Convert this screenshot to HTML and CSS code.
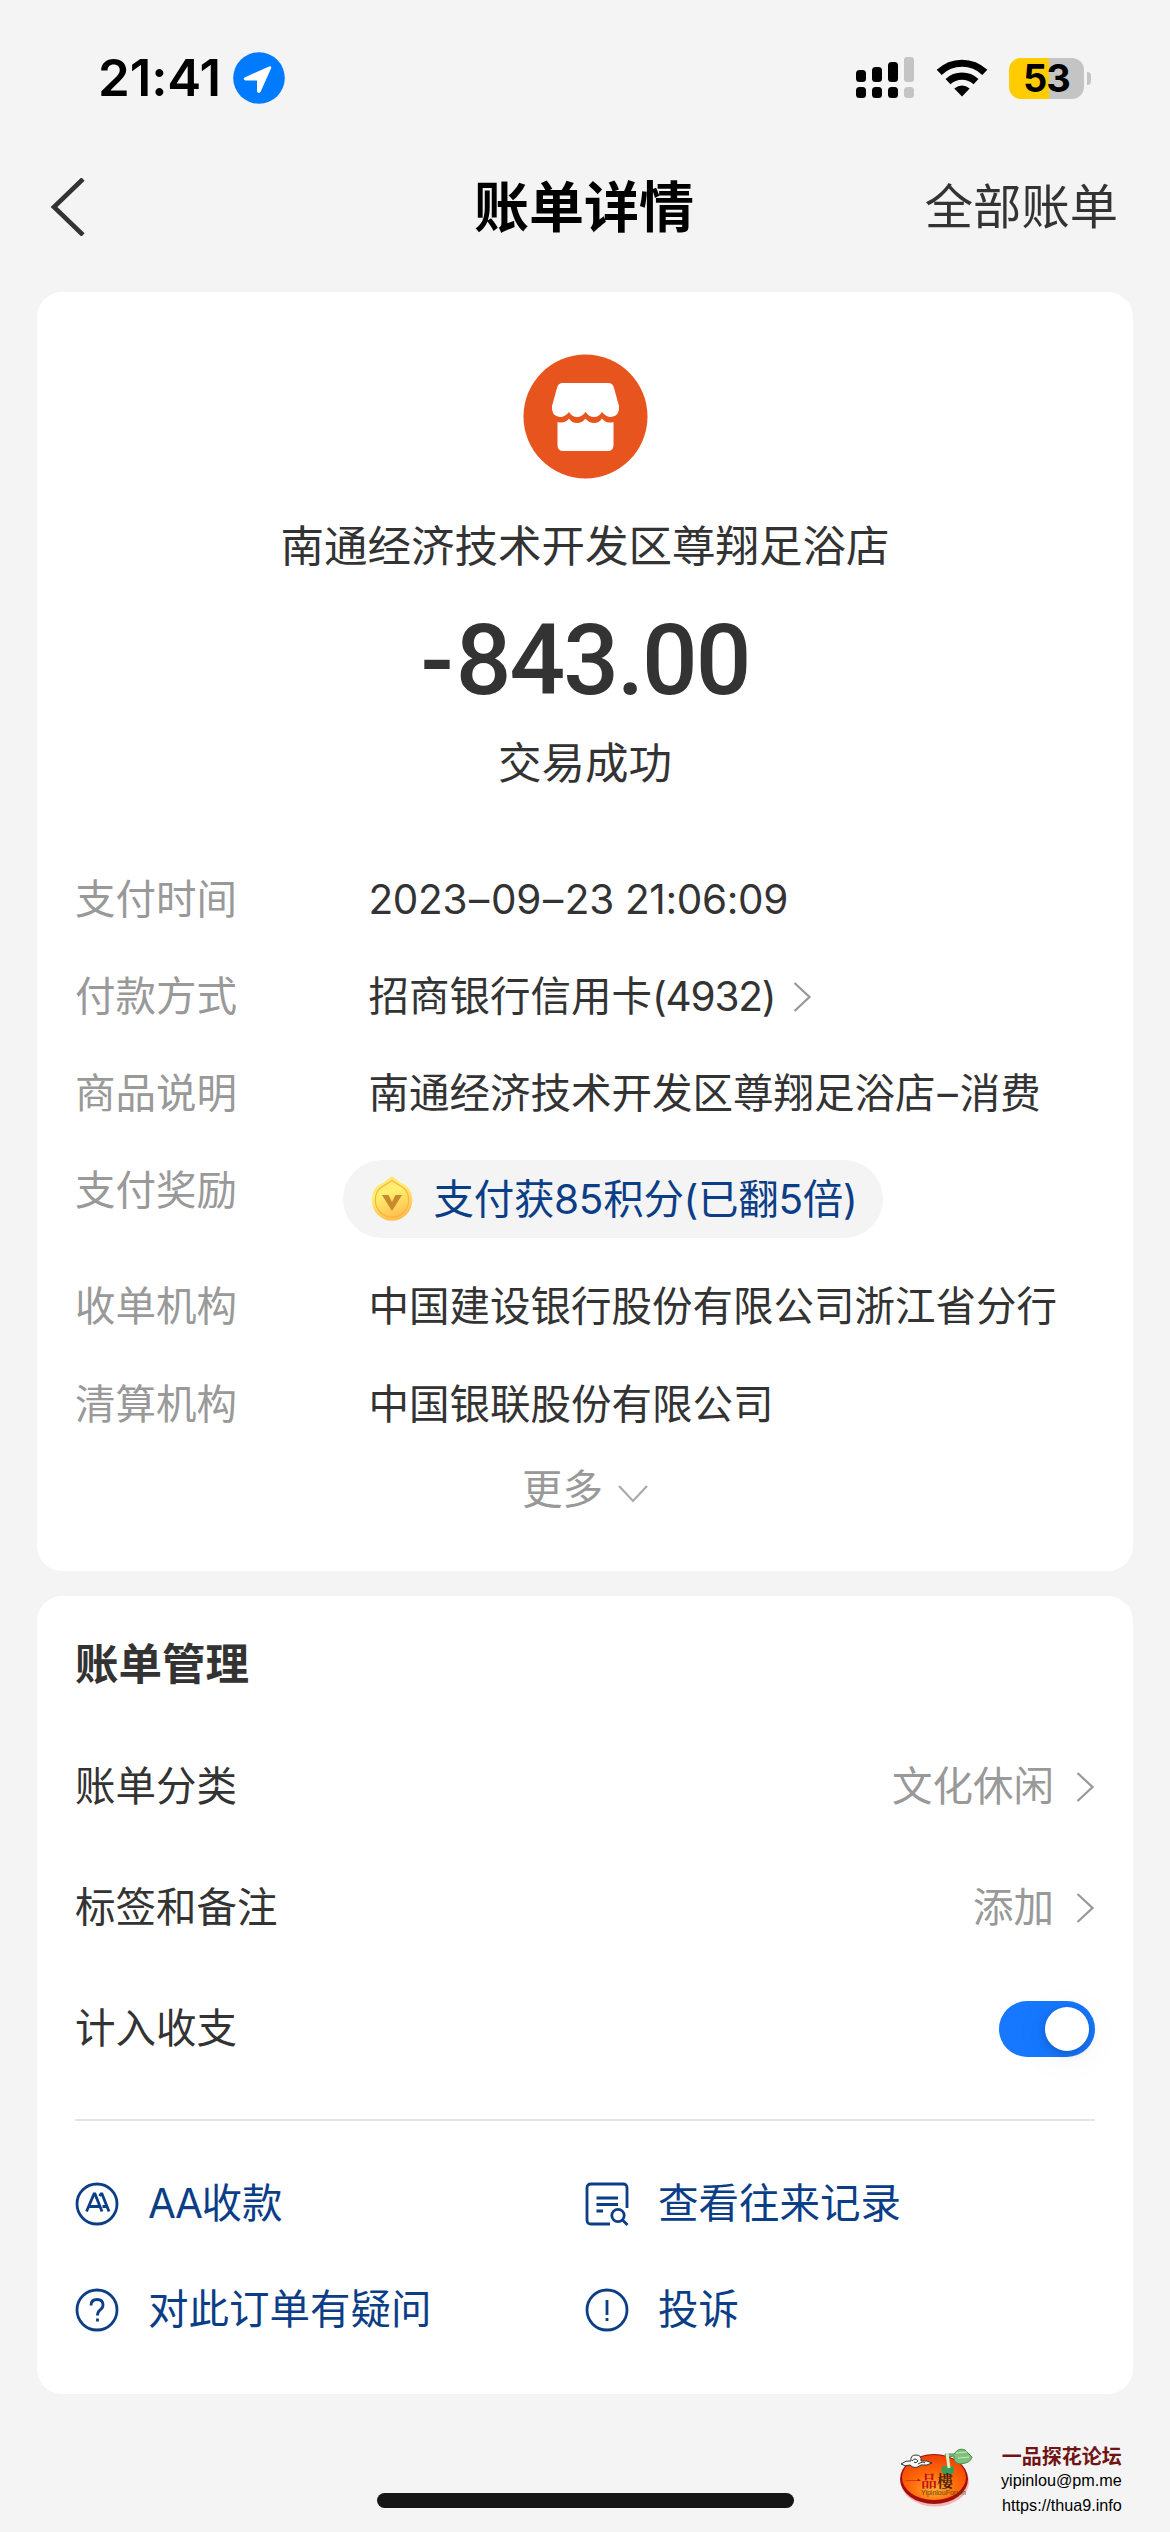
FILE: index.html
```html
<!DOCTYPE html>
<html lang="zh-CN">
<head>
<meta charset="utf-8">
<title>账单详情</title>
<link rel="stylesheet" href="styles.css">
</head>
<body>
<div class="screen">
  <header class="status">
    <span class="clock">21:41</span>
    <svg class="locate" width="52" height="52" viewBox="0 0 52 52"><circle cx="26" cy="26" r="25.8" fill="#007aff"/><path d="M11.5 25.5 L36 14.500 Q38.800 13.600 38 16.500 L27.500 40 Q25 42 24 39.500 V28.500 H12.500 Q9.500 27.500 11.500 25.500Z" fill="#fff"/></svg>
    <svg class="signal" width="58" height="42" viewBox="0 0 58 42"><g fill="#000"><rect y="13" width="10" height="12" rx="3.500"/><rect x="16" y="10" width="10" height="15" rx="3.500"/><rect x="32" y="5" width="10" height="20" rx="3.500"/><rect y="30" width="10" height="11" rx="3.500"/><rect x="16" y="30" width="10" height="11" rx="3.500"/><rect x="32" y="30" width="10" height="11" rx="3.500"/></g><g fill="#c4c4c4"><rect x="48" width="10" height="25" rx="3"/><rect x="48" y="30" width="10" height="11" rx="3.500"/></g></svg>
    <svg class="wifi" width="52" height="38" viewBox="0 0 52 38"><g fill="none" stroke="#000" stroke-width="7.200"><path d="M3.200 13.400 A33 33 0 0 1 48.800 13.400"/><path d="M12 22.600 A20.500 20.500 0 0 1 40 22.600"/></g><path d="M18.300 29.600 Q26 23.200 33.700 29.600 L26 37.500Z"/></svg>
    <div class="battery"><span>53</span></div><i class="nub"></i>
  </header>

  <nav class="nav">
    <svg class="back" width="36" height="58" viewBox="0 0 36 58"><path d="M33 1 L4 29 L33 57" fill="none" stroke="#333" stroke-width="4.600"/></svg>
    <h1>账单详情</h1>
    <a class="all">全部账单</a>
  </nav>

  <main>
    <section class="card bill">
      <svg class="shop" width="125" height="125" viewBox="0 0 125 125"><circle cx="62.500" cy="62.500" r="62" fill="#e8541e"/><path d="M40 29 H85 Q90 29 91 34 L96 52 Q97 62 88 63 Q83 63 79 58 Q76 63 71 63 Q66 63 62.500 58 Q59 63 54 63 Q49 63 46 58 Q42 63 37 63 Q28 62 29 52 L34 34 Q35 29 40 29Z" fill="#fff"/><path d="M34.500 68 Q42 70 46 64.500 Q49 69 54 69 Q59 69 62.500 64.500 Q66 69 71 69 Q76 69 79 64.500 Q83 70 90.500 68 V91 Q90.500 97 84.500 97 H40.500 Q34.500 97 34.500 91Z" fill="#fff"/></svg>
      <p class="merchant">南通经济技术开发区尊翔足浴店</p>
      <p class="amount"><span class="minus">-</span>843.00</p>
      <p class="state">交易成功</p>

      <dl class="details">
        <div class="row"><dt>支付时间</dt><dd class="date">2023<span class="dash">–</span>09<span class="dash">–</span>23 21:06:09</dd></div>
        <div class="row"><dt>付款方式</dt><dd>招商银行信用卡<span class="num">(4932)</span><svg class="chev inline" width="19" height="30" viewBox="0 0 19 30"><path d="M1.500 1 L16.500 15 L1.500 29"/></svg></dd></div>
        <div class="row"><dt>商品说明</dt><dd>南通经济技术开发区尊翔足浴店<span class="dash">–</span>消费</dd></div>
        <div class="row reward"><dt>支付奖励</dt><dd class="pill">
          <svg class="coin" width="42" height="46" viewBox="0 0 42 46"><defs><linearGradient id="gold" x1="0" y1="0" x2=".35" y2="1"><stop offset="0" stop-color="#ffe566"/><stop offset=".45" stop-color="#ffef70"/><stop offset="1" stop-color="#ffc04f"/></linearGradient></defs><path d="M21 .5 C25 2.500 28 6 34 9 C39 12 41.300 18 41.300 24.500 A20.300 20.300 0 0 1 .7 24.500 C.7 18 3 12 8 9 C14 6 17 2.500 21 .5Z" fill="url(#gold)"/><path d="M21 4.500 C25 7 28 9 32 11.500 C36 14 37.600 19 37.600 24.500 A16.600 16.600 0 0 1 4.400 24.500 C4.400 19 6 14 10 11.500 C14 9 17 7 21 4.500Z" fill="none" stroke="#f5b445" stroke-width="1.200"/><path d="M11 19 H17.500 L21 26 L24.500 19 H31 L21 35Z" fill="#c98a2b"/></svg>
          <span class="points">支付获85积分(已翻5倍)</span></dd></div>
        <div class="row low"><dt>收单机构</dt><dd>中国建设银行股份有限公司浙江省分行</dd></div>
        <div class="row low"><dt>清算机构</dt><dd>中国银联股份有限公司</dd></div>
      </dl>
      <div class="more"><span>更多</span><svg width="30" height="18" viewBox="0 0 30 18"><path d="M1 1 L15 16 L29 1" fill="none" stroke="#aaa" stroke-width="2.200"/></svg></div>
    </section>

    <section class="card manage">
      <h2>账单管理</h2>
      <div class="item"><span>账单分类</span><span class="val">文化休闲</span><svg class="chev" width="19" height="30" viewBox="0 0 19 30"><path d="M1.500 1 L16.500 15 L1.500 29"/></svg></div>
      <div class="item"><span>标签和备注</span><span class="val">添加</span><svg class="chev" width="19" height="30" viewBox="0 0 19 30"><path d="M1.500 1 L16.500 15 L1.500 29"/></svg></div>
      <div class="item"><span>计入收支</span><span class="toggle"><i></i></span></div>
      <hr>
      <div class="actions">
        <a><svg width="44" height="44" viewBox="0 0 44 44"><circle cx="22" cy="22" r="20"/><path d="M11.500 29.500 L19 12 H20 L27 29.500 M14 24.500 H24 M24.500 14 L26 12 H27 L34 29.500 M27.500 24.500 H31.500"/></svg><span><span class="aa">AA</span>收款</span></a>
        <a><svg width="44" height="44" viewBox="0 0 44 44"><path d="M42 26 V6 Q42 2 38 2 H6 Q2 2 2 6 V38 Q2 42 6 42 H25 M11.500 16 H33 M11.500 22.500 H33 M11.500 29 H18" /><circle cx="33" cy="33.500" r="6.200"/><path d="M37.300 37.800 L42.500 43"/></svg><span>查看往来记录</span></a>
        <a><svg width="44" height="44" viewBox="0 0 44 44"><circle cx="22" cy="22" r="20"/><path d="M16 17.500 Q16 11.500 22 11.500 Q28 11.500 28 17 Q28 20 25 22 Q22.500 24 22.500 27.500"/><path d="M22.500 30.500 V33.500"/></svg><span>对此订单有疑问</span></a>
        <a><svg width="44" height="44" viewBox="0 0 44 44"><circle cx="22" cy="22" r="20"/><path d="M22 12 V27 M22 30 V33"/></svg><span>投诉</span></a>
      </div>
    </section>
  </main>

  <footer class="foot">
    <div class="home"></div>
    <div class="mark">
      <svg width="76" height="62" viewBox="0 0 76 62"><defs><radialGradient id="plate" cx=".5" cy=".75" r=".8"><stop offset="0" stop-color="#ffb02e"/><stop offset=".45" stop-color="#ff6a0a"/><stop offset="1" stop-color="#ee3a00"/></radialGradient></defs>
        <ellipse cx="37" cy="34" rx="34" ry="24.500" fill="#efb9b0"/><ellipse cx="36" cy="31" rx="34" ry="25" fill="#a40d0d"/><ellipse cx="36" cy="29.500" rx="32" ry="22.500" fill="url(#plate)"/>
        <path d="M3 16 Q8 12 13 13 Q12 7 18 7 Q24 7 23 13 Q29 12 34 15 Q29 18 23 17 Q17 22 12 17 Q7 19 3 16Z" fill="#f8f8f8" stroke="#333"/><path d="M14 13 Q17 9 20 13 Q18 16 16 14 M20 16 Q25 13 27 15" fill="none" stroke="#333"/>
        <path d="M47 6 L56 6 Q61 -1 67 2 L74 9 Q73 15 62 16 Q55 15 56 8 L48 9Z" fill="#7fc07c" stroke="#4d8c4f"/><path d="M58 5 L69 4 M60 10 L71 9" stroke="#c9eac2"/><path d="M44 18 H55 Q58 24 53 27 H46 Q42 23 44 18Z" fill="#3f9b54"/><path d="M49 5 L51 20" stroke="#d8efc8" stroke-width="3"/>
        <text x="7" y="39" class="logo-a">一品<tspan fill="#4a2413">樓</tspan></text><text x="23" y="47" class="logo-b">YipinlouForum</text></svg>
      <div class="mark-text"><b>一品探花论坛</b><span>yipinlou@pm.me</span><span>https://thua9.info</span></div>
    </div>
  </footer>
</div>
</body>
</html>
```
FILE: styles.css
```css
* { box-sizing: border-box; margin: 0; padding: 0; }
body { background: #f4f4f4; color: #333; font-family: Inter, "Noto Sans CJK SC", sans-serif; }
.screen { width: 1170px; height: 2532px; display: flex; flex-direction: column; overflow: hidden; }
svg { display: block; flex: none; }

.status { height: 156px; display: flex; align-items: center; padding-left: 98px; color: #000; }
.clock { width: 134px; font-size: 51px; font-weight: 600; letter-spacing: -.1px; line-height: 60px; white-space: nowrap; }
.locate { margin-left: 1px; }
.signal { margin-left: 571px; }
.wifi { margin-left: 22px; }
.battery { width: 75px; height: 41px; margin-left: 21px; border-radius: 12px; background: linear-gradient(90deg, #ffcc00 54%, #c4c4c4 54%); text-align: center; font-size: 38px; font-weight: 700; line-height: 41px; letter-spacing: -1px; }
.nub { width: 4px; height: 13px; margin-left: 3px; border-radius: 0 5px 5px 0; background: #c4c4c4; }

.nav { height: 102px; display: grid; grid-template-columns: 1fr auto 1fr; align-items: center; padding: 0 52px 0 50px; }
.nav h1 { font-size: 55px; font-weight: 700; color: #000; line-height: 70px; }
.all { justify-self: end; font-size: 48.300px; line-height: 70px; }

main { display: flex; flex-direction: column; gap: 25px; padding: 34px 37px 0; }
.card { background: #fff; border-radius: 25px; }
.bill { height: 1279px; padding: 62px 38px 0; display: flex; flex-direction: column; align-items: center; }
.merchant, .state { font-size: 43.500px; line-height: 60px; white-space: nowrap; }
.merchant { margin-top: 37px; }
.amount { margin-top: 31px; height: 108px; font-family: Roboto, sans-serif; font-weight: 500; font-size: 98px; line-height: 108px; letter-spacing: -2px; }
.minus { letter-spacing: 2px; }
.state { margin-top: 18px; }
.details { align-self: stretch; margin-top: 58px; font-size: 40.500px; }
.row { display: grid; grid-template-columns: 293.500px 1fr; height: 97px; line-height: 97px; white-space: nowrap; }
.row dt { color: #999; }
.row dd { display: flex; align-items: center; }
.low { height: 98px; line-height: 98px; }
.date { letter-spacing: -.35px; white-space: pre; }
.dash { margin: 0 2px; }
.num { letter-spacing: -1.200px; }
.reward { height: 116px; }
.reward .pill { justify-self: start; width: 540px; height: 78px; margin: 18px 0 0 -26px; padding-left: 28px; border-radius: 39px; background: #f4f4f4; color: #0b3e87; line-height: 78px; }
.coin { margin-right: 21px; }
.points { letter-spacing: -.3px; padding-top: 2px; }
.chev path { fill: none; stroke: #999; stroke-width: 2.300; }
.inline { margin-left: 18px; }
.more { display: flex; gap: 15px; color: #999; font-size: 40.500px; line-height: 72px; }
.more svg { margin-top: 31px; }

.manage { height: 798px; padding: 31px 38px 0; }
h2 { font-size: 43.500px; line-height: 74px; font-weight: 700; }
.item { height: 121px; display: flex; align-items: center; justify-content: space-between; font-size: 40.500px; line-height: 60px; }
h2 + .item { margin-top: 25px; }
.val { margin-left: auto; margin-right: 22px; color: #999; }
.toggle { width: 96px; height: 56px; padding: 6px; border-radius: 28px; background: #1677ff; display: flex; justify-content: flex-end; }
.toggle i { width: 44px; height: 44px; border-radius: 50%; background: #fff; box-shadow: 0 3px 10px rgba(0,0,0,.2), 0 6px 40px rgba(0,0,0,.06); }
hr { border: 0; height: 2px; margin-top: 30px; background: #e5e5e5; }
.actions { display: grid; grid-template-columns: 510px 1fr; grid-auto-rows: 106px; margin-top: 30px; }
.actions a { display: flex; align-items: center; gap: 29px; color: #0b3e87; font-size: 40.500px; line-height: 60px; white-space: nowrap; }
.aa { letter-spacing: -1.500px; }
.actions svg { fill: none; stroke: #0b3e87; stroke-width: 2.800; }

.foot { flex: 1; position: relative; }
.home { position: absolute; left: 377px; bottom: 24px; width: 417px; height: 15px; border-radius: 8px; background: #161616; }
.mark { position: absolute; left: 898px; top: 54px; display: flex; gap: 27px; }
.mark-text { display: flex; flex-direction: column; align-items: flex-end; font: 16.200px/25px "Liberation Sans", sans-serif; color: #000; white-space: nowrap; }
.mark-text b { font: 700 20px/24px "Noto Sans CJK SC", sans-serif; color: #701414; margin-top: -4px; }
.logo-a { font: 700 16px "Noto Serif CJK SC", "Noto Sans CJK SC", serif; fill: #c3121c; }
.logo-b { font: 7px "Liberation Sans", sans-serif; fill: #70400f; }
```
